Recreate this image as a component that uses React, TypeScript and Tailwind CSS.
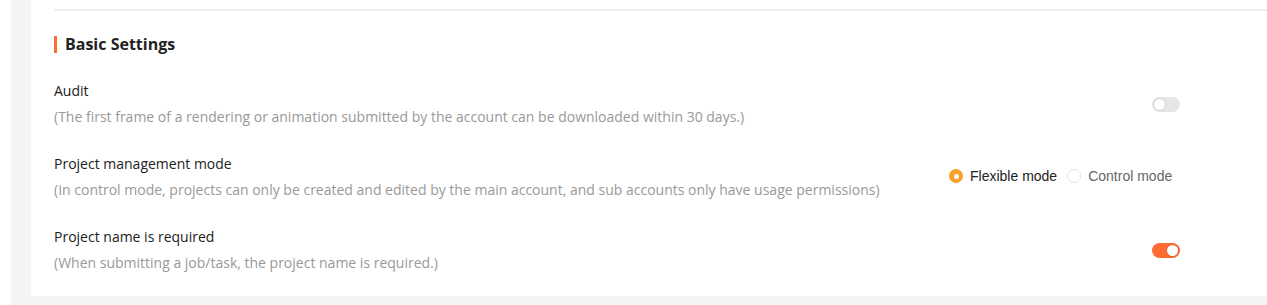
import type { ReactNode } from "react";

function Switch({ on }: { on: boolean }) {
  return (
    <div
      className={`relative w-[28px] h-[15px] rounded-full ${on ? "bg-[#ff6a35]" : "bg-[#e6e6e6]"}`}
    >
      <div
        className={`absolute top-[2px] w-[11px] h-[11px] rounded-full bg-white shadow-[0_0_2px_rgba(0,0,0,0.25)] ${on ? "right-[2px]" : "left-[2px]"}`}
      ></div>
    </div>
  );
}

function Radio({ checked, label }: { checked: boolean; label: string }) {
  return (
    <label className="flex items-center gap-[7px] cursor-pointer">
      <span
        className={`w-[14px] h-[14px] rounded-full flex items-center justify-center ${checked ? "bg-[#fba12a]" : "border border-[#e3e3e3] bg-white"}`}
      >
        {checked && <span className="w-[5px] h-[5px] rounded-full bg-white"></span>}
      </span>
      <span className={checked ? "text-[#222]" : "text-[#666]"}>{label}</span>
    </label>
  );
}

function SettingRow({ title, desc, children }: { title: string; desc: string; children: ReactNode }) {
  return (
    <div className="flex items-center">
      <div className="flex-1">
        <div className="text-[14px] leading-[20px] text-[#222]">{title}</div>
        <div className="text-[14px] leading-[20px] text-[#999] mt-[6px]">{desc}</div>
      </div>
      <div className="w-[320px] flex items-center">{children}</div>
    </div>
  );
}

export default function App() {
  return (
    <div className="w-[1267px] h-[305px] bg-white pl-[11px] overflow-hidden font-['Open_Sans',sans-serif]">
      <div className="bg-[#f4f4f4] pl-[20px] pb-[10px]">
        <div className="bg-white pl-[23px] pt-[9px] pb-[23px]">
          <div className="h-[2px] bg-[#efefef]"></div>

          <div className="flex items-center gap-[8px] mt-[21px]">
            <div className="w-[3px] h-[17px] bg-[#ff6a35]"></div>
            <h2 className="text-[16px] font-bold text-[#222]">Basic Settings</h2>
          </div>

          <div className="flex flex-col gap-[27px] mt-[25px]">
            <SettingRow
              title="Audit"
              desc="(The first frame of a rendering or animation submitted by the account can be downloaded within 30 days.)"
            >
              <div className="pl-[205px]">
                <Switch on={false} />
              </div>
            </SettingRow>

            <SettingRow
              title="Project management mode"
              desc="(In control mode, projects can only be created and edited by the main account, and sub accounts only have usage permissions)"
            >
              <div className="pl-[2px] flex items-center gap-[10px] -mt-[2px] font-['Liberation_Sans',sans-serif] text-[14px]">
                <Radio checked={true} label="Flexible mode" />
                <Radio checked={false} label="Control mode" />
              </div>
            </SettingRow>

            <SettingRow
              title="Project name is required"
              desc="(When submitting a job/task, the project name is required.)"
            >
              <div className="pl-[205px]">
                <Switch on={true} />
              </div>
            </SettingRow>
          </div>
        </div>
      </div>
    </div>
  );
}
